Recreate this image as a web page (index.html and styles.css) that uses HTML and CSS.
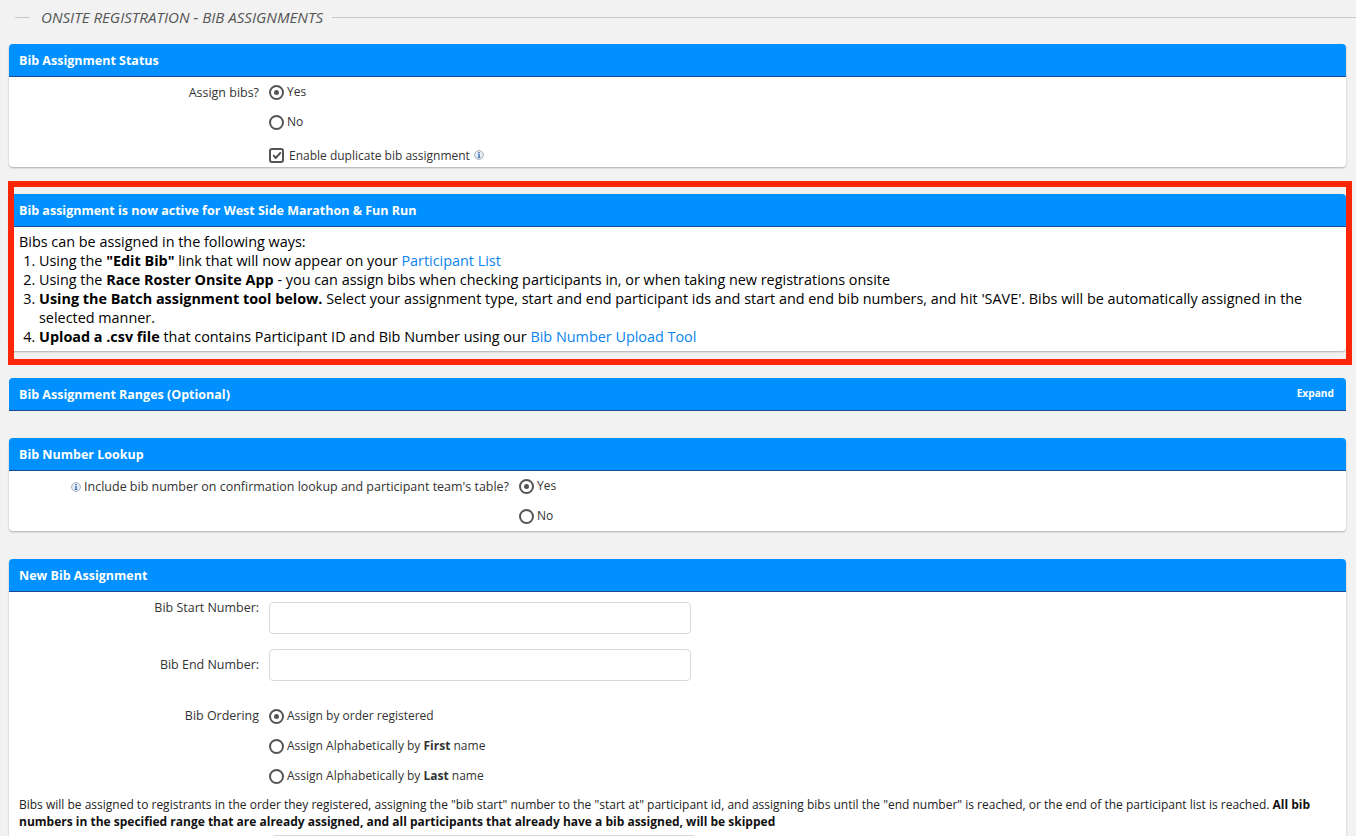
FILE: index.html
```html
<!DOCTYPE html>
<html lang="en">
<head>
<meta charset="utf-8">
<title>Onsite Registration - Bib Assignments</title>
<link rel="stylesheet" href="styles.css">
</head>
<body>
<svg class="defs" width="0" height="0" aria-hidden="true">
  <symbol id="info" viewBox="0 0 10 10">
    <circle cx="5" cy="5" r="4.4" fill="#e6edf5" stroke="#a9b2bd" stroke-width="1"/>
    <rect x="4.3" y="2" width="1.5" height="1.4" fill="#3d6fb0"/>
    <path d="M3.8 4.2h2v3h.6v.8H3.6v-.8h.7V5h-.5z" fill="#3d6fb0"/>
  </symbol>
</svg>
<main class="page">
  <div class="section-title"><span class="rule rule-short"></span><h1>ONSITE REGISTRATION - BIB ASSIGNMENTS</h1><span class="rule rule-long"></span></div>

  <section class="panel panel-status">
    <h2 class="panel-head">Bib Assignment Status</h2>
    <div class="form-row">
      <div class="label">Assign bibs?</div>
      <div class="controls">
        <label class="choice"><span class="radio on"></span><span class="choice-text">Yes</span></label>
        <label class="choice"><span class="radio"></span><span class="choice-text">No</span></label>
        <label class="choice choice-check"><span class="check"><svg viewBox="0 0 14 14" width="14" height="14"><path d="M3.2 7.2l2.6 2.7 5-5.6" fill="none" stroke="#444" stroke-width="1.8"/></svg></span><span>Enable duplicate bib assignment</span><svg class="info" width="10" height="10"><use href="#info"/></svg></label>
      </div>
    </div>
  </section>

  <div class="highlight-wrap">
    <section class="panel panel-active">
      <h2 class="panel-head">Bib assignment is now active for West Side Marathon &amp; Fun Run</h2>
      <div class="active-body">
        <div>Bibs can be assigned in the following ways:</div>
        <ol>
          <li>Using the <b>"Edit Bib"</b> link that will now appear on your <a href="#">Participant List</a></li>
          <li>Using the <b>Race Roster Onsite App</b> - you can assign bibs when checking participants in, or when taking new registrations onsite</li>
          <li><b>Using the Batch assignment tool below.</b> Select your assignment type, start and end participant ids and start and end bib numbers, and hit 'SAVE'. Bibs will be automatically assigned in the selected manner.</li>
          <li><b>Upload a .csv file</b> that contains Participant ID and Bib Number using our <a href="#">Bib Number Upload Tool</a></li>
        </ol>
      </div>
    </section>
    <div class="highlight"></div>
  </div>

  <section class="panel panel-ranges">
    <h2 class="panel-head panel-head-split"><span>Bib Assignment Ranges (Optional)</span><span class="expand">Expand</span></h2>
  </section>

  <section class="panel panel-lookup">
    <h2 class="panel-head">Bib Number Lookup</h2>
    <div class="form-row form-row-wide">
      <div class="label"><svg class="info info-left" width="10" height="10"><use href="#info"/></svg>Include bib number on confirmation lookup and participant team's table?</div>
      <div class="controls">
        <label class="choice"><span class="radio on"></span><span class="choice-text">Yes</span></label>
        <label class="choice"><span class="radio"></span><span class="choice-text">No</span></label>
      </div>
    </div>
  </section>

  <section class="panel panel-new">
    <h2 class="panel-head">New Bib Assignment</h2>
    <div class="form-row form-row-start">
      <div class="label">Bib Start Number:</div>
      <input class="text-input" type="text">
    </div>
    <div class="form-row form-row-end">
      <div class="label">Bib End Number:</div>
      <input class="text-input" type="text">
    </div>
    <div class="form-row form-row-order">
      <div class="label">Bib Ordering</div>
      <div class="controls">
        <label class="choice"><span class="radio on"></span><span class="choice-text">Assign by order registered</span></label>
        <label class="choice"><span class="radio"></span><span class="choice-text">Assign Alphabetically by <b>First</b> name</span></label>
        <label class="choice"><span class="radio"></span><span class="choice-text">Assign Alphabetically by <b>Last</b> name</span></label>
      </div>
    </div>
    <p class="note">Bibs will be assigned to registrants in the order they registered, assigning the "bib start" number to the "start at" participant id, and assigning bibs until the "end number" is reached, or the end of the participant list is reached. <b>All bib numbers in the specified range that are already assigned, and all participants that already have a bib assigned, will be skipped</b></p>
    <div class="form-row form-row-next">
      <div class="label"></div>
      <input class="text-input text-input-next" type="text">
    </div>
  </section>
</main>
</body>
</html>
```
FILE: styles.css
```css
* { box-sizing: border-box; }
html, body { margin: 0; height: 836px; overflow: hidden; }
body { background: #f2f2f2; color: #333; font-family: "Open Sans", "Liberation Sans", sans-serif; font-size: 12px; line-height: 17px; }
.defs { position: absolute; }
.page { padding: 0 10px 0 9px; }

.section-title { display: flex; align-items: center; height: 35px; margin-right: -10px; padding-left: 6px; }
.section-title h1 { margin: 0 9px 0 11px; font-size: 15.1px; font-weight: 400; font-style: italic; color: #555; white-space: nowrap; }
.rule { height: 1px; background: #c8c8c8; }
.rule-short { width: 15px; }
.rule-long { flex: 1; }

.panel { margin-top: 9px; background: #fff; border-radius: 4px; box-shadow: 0 1px 2px rgba(0,0,0,.28); }
.panel-head { height: 33px; margin: 0; padding: 0 10px; background: #0090ff; border-bottom: 1px solid #1d4a8f; border-radius: 4px 4px 0 0; color: #fff; font-size: 12.5px; font-weight: 700; line-height: 34px; }
.panel-head-split { display: flex; justify-content: space-between; padding-right: 12px; }
.expand { font-size: 10.2px; line-height: 31px; }

.form-row { display: grid; grid-template-columns: 250px 1fr; column-gap: 10px; }
.form-row-wide { grid-template-columns: 500px 1fr; }
.label { text-align: right; padding-top: 7px; font-size: 12.47px; white-space: nowrap; }
.controls { display: flex; flex-direction: column; }

.choice { display: flex; align-items: center; height: 30px; }
.choice-check { height: 24px; margin-top: 6px; }
.radio { flex: none; position: relative; width: 15px; height: 15px; border: 2px solid #555; border-radius: 50%; background: #fff; }
.radio.on::after { content: ""; position: absolute; top: 3px; left: 3px; width: 5px; height: 5px; border-radius: 50%; background: #555; }
.choice-text { margin-left: 3px; position: relative; top: -1px; }
.check { flex: none; width: 15px; height: 15px; margin-right: 5px; border: 2px solid #555; border-radius: 3px; display: flex; align-items: center; justify-content: center; }
.check svg { flex: none; }
.info { flex: none; margin-left: 4px; }
.info-left { margin: 0 3px 0 0; vertical-align: -1px; }

.highlight-wrap { position: relative; margin-top: 27px; }
.panel-active { margin-top: 0; }
.active-body { padding: 5px 10px 5px; color: #000; font-size: 14.4px; line-height: 19px; }
.active-body ol { margin: 0; padding-left: 20px; }
.active-body a { color: #0a84f0; text-decoration: none; }
.highlight { position: absolute; top: -13px; right: -6px; bottom: -14px; left: -1px; border: 6px solid #fb2508; pointer-events: none; }

.panel-ranges { margin-top: 27px; border-radius: 4px 4px 0 0; box-shadow: none; background: transparent; }
.panel-lookup { margin-top: 27px; height: 93px; }
.panel-new { margin-top: 28px; border-radius: 4px 4px 0 0; }

.form-row-start { height: 57px; }
.form-row-start .text-input { margin-top: 10px; }
.form-row-end { height: 47px; }
.text-input { width: 422px; height: 32px; border: 1px solid #d9d9d9; border-radius: 4px; background: #fff; }
.form-row-order { padding-top: 5px; }
.form-row-order .label { padding-top: 6px; }
.note { margin: 5px 0 0; padding: 0 10px; color: #222; }
.note b { color: #111; }
.form-row-next { padding-top: 5px; }
.text-input-next { margin-left: 2px; width: 426px; }
```
